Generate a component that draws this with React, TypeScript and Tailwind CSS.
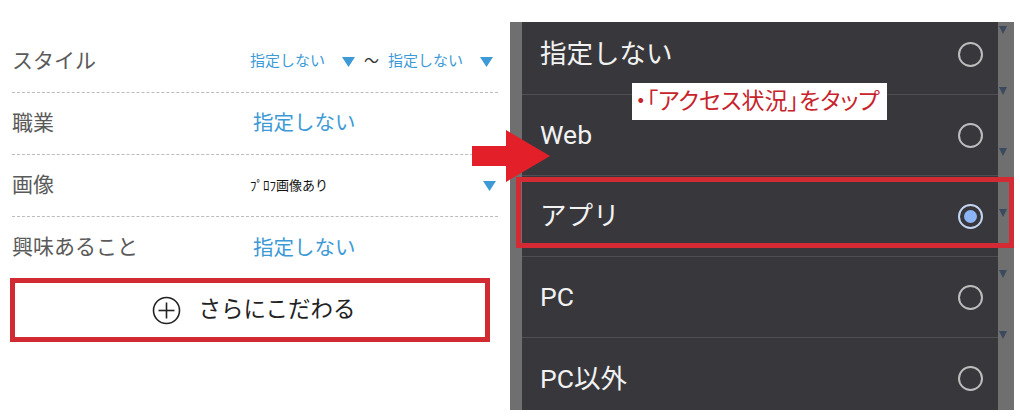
import React from "react";

const JP = "font-['Roboto','Noto_Sans_CJK_JP',sans-serif]";

function Tri({ className = "" }: { className?: string }) {
  return (
    <svg width="13" height="10" viewBox="0 0 13 10" className={className}>
      <polygon points="0,0 13,0 6.5,10" fill="#3d9ad6" />
    </svg>
  );
}

function Radio({ checked = false }: { checked?: boolean }) {
  if (checked) {
    return (
      <div className="w-[25px] h-[25px] rounded-full border-[2.5px] border-[#c3d5f2] flex items-center justify-center">
        <div className="w-[13px] h-[13px] rounded-full bg-[#8bb5f7]" />
      </div>
    );
  }
  return <div className="w-[25px] h-[25px] rounded-full border-[2.5px] border-[#bdbdbd]" />;
}

const options: { label: string; checked?: boolean }[] = [
  { label: "指定しない" },
  { label: "Web" },
  { label: "アプリ", checked: true },
  { label: "PC" },
  { label: "PC以外" },
];

export default function App() {
  return (
    <div className={`relative w-[1020px] h-[420px] bg-white flex overflow-hidden ${JP}`}>
      {/* Left: search conditions */}
      <div className="w-[510px] pl-[12px] pr-[12px] pt-[31px] flex flex-col">
        <div className="h-[62px] flex items-center border-b border-dashed border-[#bcbcbc]">
          <div className="w-[238px] text-[21px] text-[#5a5a5a]">スタイル</div>
          <div className="flex items-center flex-1 text-[15px] text-[#3d9ad6]">
            <span>指定しない</span>
            <Tri className="ml-[17px]" />
            <span className="ml-[9px] text-[#333] text-[15px]">〜</span>
            <span className="ml-[9px]">指定しない</span>
            <Tri className="ml-[17px]" />
          </div>
        </div>
        <div className="h-[62px] flex items-center border-b border-dashed border-[#bcbcbc]">
          <div className="w-[241px] text-[21px] text-[#5a5a5a]">職業</div>
          <div className="text-[20.5px] text-[#3d9ad6]">指定しない</div>
        </div>
        <div className="h-[62px] flex items-center border-b border-dashed border-[#bcbcbc]">
          <div className="w-[238px] text-[21px] text-[#5a5a5a]">画像</div>
          <div className="flex-1 text-[13px] text-[#111]">ﾌﾟﾛﾌ画像あり</div>
          <Tri className="mr-[2px]" />
        </div>
        <div className="h-[62px] flex items-center">
          <div className="w-[241px] text-[21px] text-[#5a5a5a]">興味あること</div>
          <div className="text-[20.5px] text-[#3d9ad6]">指定しない</div>
        </div>
        <div className="-mt-[1px] -ml-[2px] w-[480px] h-[64px] border-[5px] border-[#d12a32] bg-white flex items-center justify-center gap-[17px] pl-[8px]">
          <svg width="29" height="29" viewBox="0 0 29 29">
            <circle cx="14.5" cy="14.5" r="13" fill="none" stroke="#222" strokeWidth="1.6" />
            <line x1="14.5" y1="6.5" x2="14.5" y2="22.5" stroke="#222" strokeWidth="1.6" />
            <line x1="6.5" y1="14.5" x2="22.5" y2="14.5" stroke="#222" strokeWidth="1.6" />
          </svg>
          <span className="text-[22.5px] text-[#222]">さらにこだわる</span>
        </div>
      </div>

      {/* Right: option dialog over greyed page */}
      <div className="mt-[22px] h-[388px] w-[504px] bg-[#6f6f6f] flex">
        <div className="w-[12px]" />
        <div className="w-[476px] h-full bg-[#38383c] overflow-hidden">
          <div className="-mt-[8px]">
            {options.map((o, i) => (
              <div
                key={o.label}
                className={`h-[81px] flex items-center justify-between pl-[18px] pr-[15px] ${
                  i < options.length - 1 ? "border-b border-[#4e4e54]" : ""
                }`}
              >
                <span className="text-[26.5px] text-[#f2f2f2]">{o.label}</span>
                <Radio checked={o.checked} />
              </div>
            ))}
          </div>
        </div>
        <div className="flex-1 flex flex-col pt-[4px] gap-[51px] pl-[1px]">
          {[0, 1, 2, 3, 4, 5].map((k) => (
            <svg key={k} width="8" height="10" viewBox="0 0 8 10">
              <polygon points="0,0 8,0 4,8" fill="#3b4a5e" />
            </svg>
          ))}
        </div>
      </div>

      {/* Annotation: red arrow */}
      <svg className="absolute left-[470px] top-[128px]" width="84" height="56" viewBox="0 0 84 56">
        <polygon points="2,18 36,18 36,2 80,28 36,54 36,38 2,38" fill="#e3202a" />
      </svg>

      {/* Annotation: highlight around selected option */}
      <div className="absolute left-[516px] top-[177px] w-[498px] h-[71px] border-[5px] border-[#d42a33]" />

      {/* Annotation: caption */}
      <div className="absolute left-[632px] top-[83px] w-[255px] h-[37px] bg-white flex items-center pl-[3px]">
        <span className="text-[23px] leading-none text-[#c8242c] [font-feature-settings:'palt']">
          ・「アクセス状況」をタップ
        </span>
      </div>
    </div>
  );
}
